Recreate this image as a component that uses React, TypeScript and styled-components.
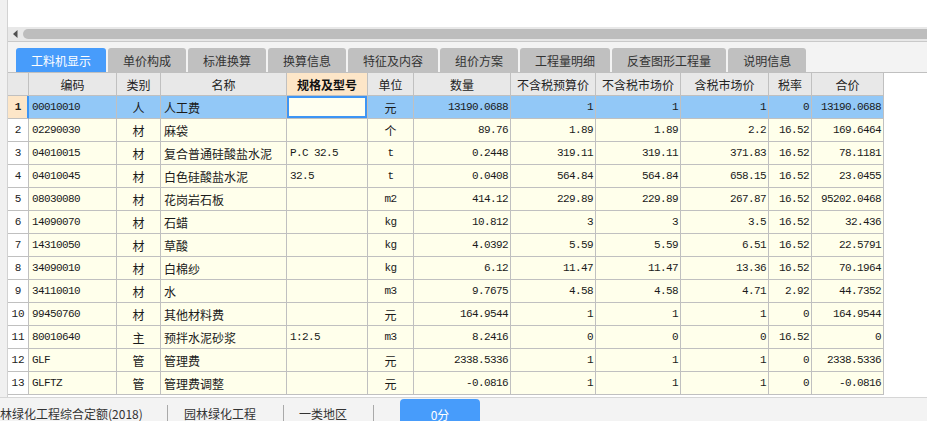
import React from 'react';
import styled, { createGlobalStyle, css } from 'styled-components';

const CJK = `"Noto Sans CJK SC", "Microsoft YaHei", sans-serif`;
const MONO = `"Liberation Mono", "Noto Sans CJK SC", monospace`;

const GlobalStyle = createGlobalStyle`
  html, body { margin: 0; padding: 0; background: #fff; overflow: hidden; }
  #root { width: 927px; height: 421px; overflow: hidden; }
  *, *::before, *::after { box-sizing: border-box; }
`;

const Page = styled.div`
  width: 927px;
  height: 421px;
  display: flex;
  flex-direction: column;
  overflow: hidden;
  font-family: ${CJK};
  color: #222;
`;

const Workspace = styled.div`
  flex: none;
  height: 397px;
  display: flex;
`;

const LeftStrip = styled.div`
  flex: none;
  width: 8px;
  background: #f0f0f0;
  border-right: 1px solid #d2d2d2;
`;

const Main = styled.div`
  flex: 1;
  min-width: 0;
  display: flex;
  flex-direction: column;
  background: #fff;
`;

const TopBlank = styled.div`
  flex: none;
  height: 27px;
  background: #fff;
`;

const ScrollTrack = styled.div`
  flex: none;
  height: 14px;
  background: #e8e8e8;
  display: flex;
  align-items: center;
  padding-left: 5px;
`;

const Thumb = styled.div`
  flex: 1;
  height: 10px;
  margin-left: 5px;
  background: #bdbdbd;
  border-radius: 5px 0 0 5px;
`;

const Divider = styled.div`
  flex: none;
  height: 1px;
  background: #c9c9c9;
`;

const TabBar = styled.div`
  flex: none;
  height: 31px;
  display: flex;
  gap: 2px;
  padding: 6px 0 0 8px;
  background: #f3f3f3;
  border-bottom: 1px solid #c0c0c0;
`;

const Tab = styled.div<{ $active?: boolean }>`
  height: 24px;
  padding: 0 15px;
  display: flex;
  align-items: center;
  justify-content: center;
  font-size: 12px;
  white-space: nowrap;
  border-radius: 3px 3px 0 0;
  background: ${(p) => (p.$active ? '#479cfb' : '#c0c0c0')};
  color: ${(p) => (p.$active ? '#fff' : '#333')};
`;

const Grid = styled.div<{ $cols: string }>`
  display: grid;
  grid-template-columns: ${(p) => p.$cols};
  grid-auto-rows: 23px;
  width: max-content;
`;

const HeadCell = styled.div<{ $hl?: boolean }>`
  display: flex;
  align-items: center;
  justify-content: center;
  font-size: 12px;
  white-space: nowrap;
  border-right: 1px solid #c0c0c0;
  border-bottom: 1px solid #c0c0c0;
  background: ${(p) => (p.$hl ? '#fde6c8' : '#e8e8e8')};
  font-weight: ${(p) => (p.$hl ? 700 : 400)};
  color: ${(p) => (p.$hl ? '#111' : '#222')};
`;

const NumCell = styled.div<{ $sel?: boolean }>`
  display: flex;
  align-items: center;
  justify-content: center;
  font-family: ${MONO};
  font-size: 11px;
  border-right: 1px solid ${(p) => (p.$sel ? '#3d95f5' : '#c0c0c0')};
  border-bottom: 1px solid #c0c0c0;
  background: ${(p) => (p.$sel ? '#fde6c8' : '#fff')};
  font-weight: ${(p) => (p.$sel ? 700 : 400)};
  ${(p) => p.$sel && css`box-shadow: inset -1px 0 0 #3d95f5;`}
  color: #222;
`;

type Align = 'left' | 'center' | 'right';

const Cell = styled.div<{ $align: Align; $mono?: boolean; $sel?: boolean; $edit?: boolean }>`
  display: flex;
  align-items: center;
  justify-content: ${(p) => (p.$align === 'left' ? 'flex-start' : p.$align === 'right' ? 'flex-end' : 'center')};
  padding: ${(p) => (p.$align === 'left' ? '0 0 0 3px' : p.$align === 'right' ? '0 2px 0 0' : '0')};
  white-space: nowrap;
  overflow: hidden;
  border-right: 1px solid #c0c0c0;
  border-bottom: 1px solid #c0c0c0;
  background: ${(p) => (p.$edit ? '#fffff0' : p.$sel ? '#92c8f7' : '#ffffeb')};
  color: #1a1a1a;
  ${(p) =>
    p.$mono
      ? css`
          font-family: ${MONO};
          font-size: 11px;
          letter-spacing: -0.6px;
        `
      : css`
          font-family: ${CJK};
          font-size: 12px;
        `}
  ${(p) => p.$edit && css`box-shadow: inset 0 0 0 2px #3d95f5;`}
`;

const StatusBar = styled.div`
  flex: none;
  height: 32px;
  display: flex;
  align-items: stretch;
  background: #f3f3f3;
  border-top: 1px solid #d6d6d6;
  font-size: 12px;
  color: #333;
`;

const StatusItem = styled.div<{ $w: number; $pl: number }>`
  flex: none;
  width: ${(p) => p.$w}px;
  padding-left: ${(p) => p.$pl}px;
  display: flex;
  align-items: center;
  white-space: nowrap;
  overflow: hidden;
`;

const Separator = styled.div`
  flex: none;
  width: 1px;
  margin-top: 7px;
  background: #a9a9a9;
`;

const ScoreButton = styled.div`
  flex: none;
  width: 80px;
  margin: 1px 0 0 26px;
  border-radius: 4px 4px 0 0;
  background: #479cfb;
  color: #fff;
  display: flex;
  align-items: center;
  justify-content: center;
  font-size: 12px;
`;

type Col = { title: string; w: number; align: Align; mono?: boolean; hl?: boolean };

const cols: Col[] = [
  { title: '编码', w: 88, align: 'left', mono: true },
  { title: '类别', w: 44, align: 'center' },
  { title: '名称', w: 126, align: 'left' },
  { title: '规格及型号', w: 81, align: 'left', mono: true, hl: true },
  { title: '单位', w: 46, align: 'center', mono: true },
  { title: '数量', w: 97, align: 'right', mono: true },
  { title: '不含税预算价', w: 85, align: 'right', mono: true },
  { title: '不含税市场价', w: 85, align: 'right', mono: true },
  { title: '含税市场价', w: 88, align: 'right', mono: true },
  { title: '税率', w: 43, align: 'right', mono: true },
  { title: '合价', w: 72, align: 'right', mono: true },
];

const rows: string[][] = [
  ['00010010', '人', '人工费', '', '元', '13190.0688', '1', '1', '1', '0', '13190.0688'],
  ['02290030', '材', '麻袋', '', '个', '89.76', '1.89', '1.89', '2.2', '16.52', '169.6464'],
  ['04010015', '材', '复合普通硅酸盐水泥', 'P.C 32.5', 't', '0.2448', '319.11', '319.11', '371.83', '16.52', '78.1181'],
  ['04010045', '材', '白色硅酸盐水泥', '32.5', 't', '0.0408', '564.84', '564.84', '658.15', '16.52', '23.0455'],
  ['08030080', '材', '花岗岩石板', '', 'm2', '414.12', '229.89', '229.89', '267.87', '16.52', '95202.0468'],
  ['14090070', '材', '石蜡', '', 'kg', '10.812', '3', '3', '3.5', '16.52', '32.436'],
  ['14310050', '材', '草酸', '', 'kg', '4.0392', '5.59', '5.59', '6.51', '16.52', '22.5791'],
  ['34090010', '材', '白棉纱', '', 'kg', '6.12', '11.47', '11.47', '13.36', '16.52', '70.1964'],
  ['34110010', '材', '水', '', 'm3', '9.7675', '4.58', '4.58', '4.71', '2.92', '44.7352'],
  ['99450760', '材', '其他材料费', '', '元', '164.9544', '1', '1', '1', '0', '164.9544'],
  ['80010640', '主', '预拌水泥砂浆', '1:2.5', 'm3', '8.2416', '0', '0', '0', '16.52', '0'],
  ['GLF', '管', '管理费', '', '元', '2338.5336', '1', '1', '1', '0', '2338.5336'],
  ['GLFTZ', '管', '管理费调整', '', '元', '-0.0816', '1', '1', '1', '0', '-0.0816'],
];

const tabs = ['工料机显示', '单价构成', '标准换算', '换算信息', '特征及内容', '组价方案', '工程量明细', '反查图形工程量', '说明信息'];

const LeftArrow = () => (
  <svg width="5" height="8" viewBox="0 0 5 8">
    <path d="M4.5 0 L0 4 L4.5 8 Z" fill="#505050" />
  </svg>
);

export default function App() {
  const template = ['21px', ...cols.map((c) => `${c.w}px`)].join(' ');
  return (
    <>
      <GlobalStyle />
      <Page>
        <Workspace>
          <LeftStrip />
          <Main>
            <TopBlank />
            <ScrollTrack>
              <LeftArrow />
              <Thumb />
            </ScrollTrack>
            <Divider />
            <TabBar>
              {tabs.map((t, i) => (
                <Tab key={t} $active={i === 0}>
                  {t}
                </Tab>
              ))}
            </TabBar>
            <Grid $cols={template}>
              <HeadCell />
              {cols.map((c) => (
                <HeadCell key={c.title} $hl={c.hl}>
                  {c.title}
                </HeadCell>
              ))}
              {rows.map((r, ri) => {
                const sel = ri === 0;
                return (
                  <React.Fragment key={ri}>
                    <NumCell $sel={sel}>{ri + 1}</NumCell>
                    {r.map((v, ci) => {
                      const c = cols[ci];
                      const isCjkUnit = ci === 4 && /[\u4e00-\u9fff]/.test(v);
                      return (
                        <Cell
                          key={ci}
                          $align={c.align}
                          $mono={c.mono && !isCjkUnit}
                          $sel={sel}
                          $edit={sel && ci === 3}
                        >
                          {v}
                        </Cell>
                      );
                    })}
                  </React.Fragment>
                );
              })}
            </Grid>
          </Main>
        </Workspace>
        <StatusBar>
          <StatusItem $w={167} $pl={0}>
            林绿化工程综合定额(2018)
          </StatusItem>
          <Separator />
          <StatusItem $w={115} $pl={16}>
            园林绿化工程
          </StatusItem>
          <Separator />
          <StatusItem $w={89} $pl={15}>
            一类地区
          </StatusItem>
          <Separator />
          <ScoreButton>0分</ScoreButton>
        </StatusBar>
      </Page>
    </>
  );
}
